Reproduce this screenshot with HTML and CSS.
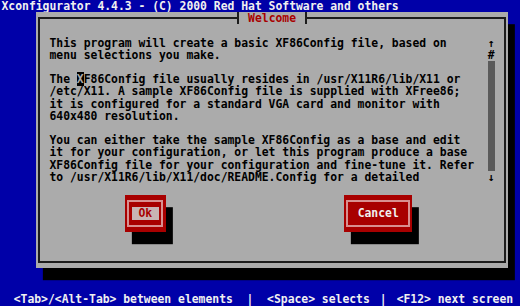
FILE: index.html
```html
<!DOCTYPE html>
<html>
<head>
<meta charset="utf-8">
<link rel="stylesheet" href="styles.css">
</head>
<body>
<div class="screen">
  <div class="topbar">Xconfigurator 4.4.3 - (C) 2000 Red Hat Software and others</div>
  <div class="dialog">
    <div class="titlerow">
      <div class="seg seg-l"></div>
      <div class="ttl"> Welcome </div>
      <div class="seg seg-r"></div>
    </div>
    <div class="frame">
      <div class="content">
        <div class="text">This program will create a basic XF86Config file, based on
menu selections you make.

The <span class="cursor">X</span>F86Config file usually resides in /usr/X11R6/lib/X11 or
/etc/X11. A sample XF86Config file is supplied with XFree86;
it is configured for a standard VGA card and monitor with
640x480 resolution.

You can either take the sample XF86Config as a base and edit
it for your configuration, or let this program produce a base
XF86Config file for your configuration and fine-tune it. Refer
to /usr/X11R6/lib/X11/doc/README.Config for a detailed</div>
        <div class="scroll">
          <div class="sb-cell">↑</div>
          <div class="sb-cell">#</div>
          <div class="sb-track"></div>
          <div class="sb-cell">↓</div>
        </div>
      </div>
      <div class="buttons">
        <div class="btn btn-ok"><div class="btn-in"><span class="btn-lbl focus"> Ok </span></div></div>
        <div class="btn btn-cancel"><div class="btn-in"><span class="btn-lbl"> Cancel </span></div></div>
      </div>
    </div>
  </div>
  <div class="help"><span>  &lt;Tab&gt;/&lt;Alt-Tab&gt; between elements  |  &lt;Space&gt; selects</span><span class="help-sep">|</span><span class="help-end">&lt;F12&gt; next screen</span></div>
</div>
</body>
</html>
```
FILE: styles.css
```css
html, body {
  margin: 0;
  padding: 0;
  background: #0000a8;
}

.screen {
  width: 520px;
  height: 306px;
  background: #0000a8;
  display: flex;
  flex-direction: column;
  overflow: hidden;
  font-family: "DejaVu Sans Mono", monospace;
  font-weight: bold;
  font-size: 11.38px;
  letter-spacing: 0;
  line-height: 12.2px;
  white-space: pre;
}

.topbar {
  flex: none;
  height: 12.2px;
  padding-left: 1.5px;
  color: #f0f0f0;
}

.dialog {
  flex: none;
  margin-left: 35.75px;
  width: 472.65px;
  height: 256.2px;
  box-sizing: border-box;
  padding: 0 2.4px 5.1px;
  background: #ababab;
  box-shadow: 6.85px 12.2px 0 #000;
  display: flex;
  flex-direction: column;
}

.titlerow {
  flex: none;
  display: flex;
  height: 12.2px;
}

.seg {
  flex: 1;
  margin-top: 5.1px;
  border-top: 2px solid #1c1c1c;
}

.seg-l { border-left: 2px solid #1c1c1c; }
.seg-r { border-right: 2px solid #1c1c1c; }

.ttl {
  flex: none;
  width: 70.5px;
  box-sizing: border-box;
  border-left: 2px solid #1c1c1c;
  border-right: 2px solid #1c1c1c;
  text-align: center;
  color: #a80000;
}

.frame {
  flex: 1;
  border: 2px solid #1c1c1c;
  border-top: none;
  padding: 12.2px 0 0 9.3px;
  display: flex;
  flex-direction: column;
}

.content {
  display: flex;
  height: 146.4px;
}

.text {
  width: 438.4px;
  color: #000;
}

.cursor {
  background: #000;
  color: #ababab;
}

.scroll {
  width: 6.85px;
  display: flex;
  flex-direction: column;
  color: #000;
}

.sb-cell {
  height: 12.2px;
  text-align: center;
}

.sb-track {
  height: 109.8px;
  background: #5a5a5a;
}

.buttons {
  display: flex;
  margin-top: 12.2px;
  padding-left: 75.35px;
  gap: 178.1px;
}

.btn {
  height: 36.6px;
  box-sizing: border-box;
  padding: 5.1px 2.4px;
  background: #a80000;
  box-shadow: 6.85px 12.2px 0 #000;
}

.btn-ok { width: 41.1px; }
.btn-cancel { width: 68.5px; }

.btn-in {
  height: 100%;
  box-sizing: border-box;
  border: 2px solid #d89090;
  display: flex;
  align-items: center;
  justify-content: center;
}

.btn-lbl {
  color: #f0f0f0;
}

.btn-lbl.focus {
  background: #c8b4b4;
  color: #a80000;
}

.help {
  flex: none;
  display: flex;
  margin-top: 24.4px;
  height: 12.2px;
  color: #f0f0f0;
}

.help-sep {
  margin-left: 10px;
}

.help-end {
  margin-left: 10px;
}
```
